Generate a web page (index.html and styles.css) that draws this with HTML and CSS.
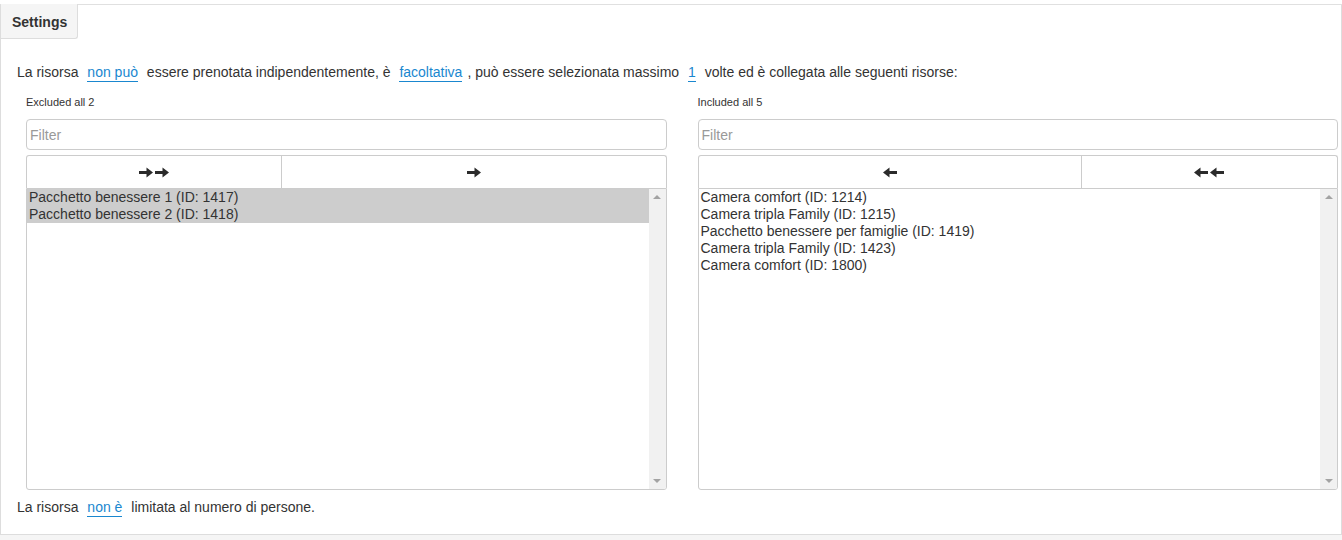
FILE: index.html
```html
<!DOCTYPE html>
<html lang="it">
<head>
<meta charset="utf-8">
<title>Settings</title>
<link rel="stylesheet" href="styles.css">
</head>
<body>
<div class="panel">
  <div class="tabs">
    <div class="tab">Settings</div>
  </div>
  <div class="panel-body">
    <p class="sentence">La risorsa <a class="editable">non può</a> essere prenotata indipendentemente, è <a class="editable">facoltativa</a>, può essere selezionata massimo <a class="editable">1</a> volte ed è collegata alle seguenti risorse:</p>

    <div class="dual">
      <div class="box">
        <div class="box-label">Excluded all 2</div>
        <input class="filter" type="text" placeholder="Filter">
        <div class="btn-group">
          <button class="btn btn-all">
            <svg class="arrow" width="14" height="11" viewBox="0 0 14 11"><path d="M0 4h7.5V0.5L14 5.5 7.5 10.5V7H0z"/></svg>
            <svg class="arrow" width="14" height="11" viewBox="0 0 14 11"><path d="M0 4h7.5V0.5L14 5.5 7.5 10.5V7H0z"/></svg>
          </button>
          <button class="btn btn-one">
            <svg class="arrow" width="14" height="11" viewBox="0 0 14 11"><path d="M0 4h7.5V0.5L14 5.5 7.5 10.5V7H0z"/></svg>
          </button>
        </div>
        <div class="list">
          <div class="items">
            <div class="item selected">Pacchetto benessere 1 (ID: 1417)</div>
            <div class="item selected">Pacchetto benessere 2 (ID: 1418)</div>
          </div>
          <div class="scrollbar">
            <span class="tri up"></span>
            <span class="tri down"></span>
          </div>
        </div>
      </div>

      <div class="box">
        <div class="box-label">Included all 5</div>
        <input class="filter" type="text" placeholder="Filter">
        <div class="btn-group reverse">
          <button class="btn btn-one">
            <svg class="arrow" width="14" height="11" viewBox="0 0 14 11"><path d="M14 4H6.5V0.5L0 5.5 6.5 10.5V7H14z"/></svg>
          </button>
          <button class="btn btn-all">
            <svg class="arrow" width="14" height="11" viewBox="0 0 14 11"><path d="M14 4H6.5V0.5L0 5.5 6.5 10.5V7H14z"/></svg>
            <svg class="arrow" width="14" height="11" viewBox="0 0 14 11"><path d="M14 4H6.5V0.5L0 5.5 6.5 10.5V7H14z"/></svg>
          </button>
        </div>
        <div class="list">
          <div class="items">
            <div class="item">Camera comfort (ID: 1214)</div>
            <div class="item">Camera tripla Family (ID: 1215)</div>
            <div class="item">Pacchetto benessere per famiglie (ID: 1419)</div>
            <div class="item">Camera tripla Family (ID: 1423)</div>
            <div class="item">Camera comfort (ID: 1800)</div>
          </div>
          <div class="scrollbar">
            <span class="tri up"></span>
            <span class="tri down"></span>
          </div>
        </div>
      </div>
    </div>

    <p class="sentence last">La risorsa <a class="editable">non è</a> limitata al numero di persone.</p>
  </div>
</div>
<div class="footer-strip"></div>
</body>
</html>
```

FILE: styles.css
```css
html, body {
  margin: 0;
  padding: 0;
  background: #fff;
}

body {
  font-family: "Liberation Sans", Arial, sans-serif;
  font-size: 14px;
  color: #333;
  padding-top: 4px;
}

.panel {
  border: 1px solid #ddd;
  border-top-color: #e0e0e0;
  height: 531px;
  box-sizing: border-box;
}

.tabs {
  display: flex;
  height: 34px;
}

.tab {
  background: #f5f5f5;
  border-right: 1px solid #ddd;
  border-bottom: 1px solid #ddd;
  border-bottom-right-radius: 3px;
  font-weight: bold;
  font-size: 14px;
  line-height: 36px;
  padding: 0 10px 0 11px;
  margin-top: -1px;
  height: 35px;
  box-sizing: border-box;
}

.panel-body {
  padding: 0 2px 0 16px;
}

.sentence {
  margin: 23px 0 0;
  line-height: 20px;
}

.sentence.last {
  margin-top: 7px;
}

.editable {
  color: #1a87cf;
  border-bottom: 1px solid #1a87cf;
  text-decoration: none;
  margin: 0 5px;
  padding-bottom: 1px;
}

.dual {
  display: grid;
  grid-template-columns: 1fr 1fr;
  column-gap: 31px;
  margin: 13px 1px 0 9px;
}

.box {
  display: flex;
  flex-direction: column;
}

.box-label {
  font-size: 11px;
  line-height: 15px;
  height: 15px;
}

.filter {
  margin-top: 9px;
  height: 31px;
  box-sizing: border-box;
  border: 1px solid #ccc;
  border-radius: 4px;
  padding: 0 3px;
  font-family: inherit;
  font-size: 14px;
  color: #555;
  outline: none;
}

.filter::placeholder {
  color: #999;
}

.btn-group {
  display: grid;
  grid-template-columns: 2fr 3fr;
  margin-top: 5px;
  height: 33px;
}

.btn-group.reverse {
  grid-template-columns: 3fr 2fr;
}

.btn {
  background: #fff;
  border: 1px solid #ccc;
  border-bottom: none;
  margin: 0;
  padding: 0;
  display: flex;
  align-items: center;
  justify-content: center;
  gap: 2px;
  font: inherit;
}

.btn-group .btn:first-child {
  border-top-left-radius: 3px;
}

.btn-group .btn:last-child {
  border-left: none;
  border-top-right-radius: 3px;
}

.arrow {
  fill: #2b2b2b;
  display: block;
}

.list {
  display: flex;
  height: 302px;
  border: 1px solid #ccc;
  border-bottom-left-radius: 3px;
  border-bottom-right-radius: 3px;
  box-sizing: border-box;
  overflow: hidden;
}

.items {
  flex: 1;
}

.item {
  line-height: 17px;
  height: 17px;
  padding: 0 2px;
  white-space: nowrap;
  color: #333;
}

.item.selected {
  background: #cdcdcd;
}

.scrollbar {
  width: 17px;
  background: #f1f1f1;
  display: flex;
  flex-direction: column;
  justify-content: space-between;
  align-items: center;
  padding: 6px 0;
  box-sizing: border-box;
}

.tri {
  width: 0;
  height: 0;
  border-left: 4px solid transparent;
  border-right: 4px solid transparent;
}

.tri.up {
  border-bottom: 4px solid #a3a3a3;
}

.tri.down {
  border-top: 4px solid #a3a3a3;
}

.footer-strip {
  height: 5px;
  background: #f5f5f5;
}
```
